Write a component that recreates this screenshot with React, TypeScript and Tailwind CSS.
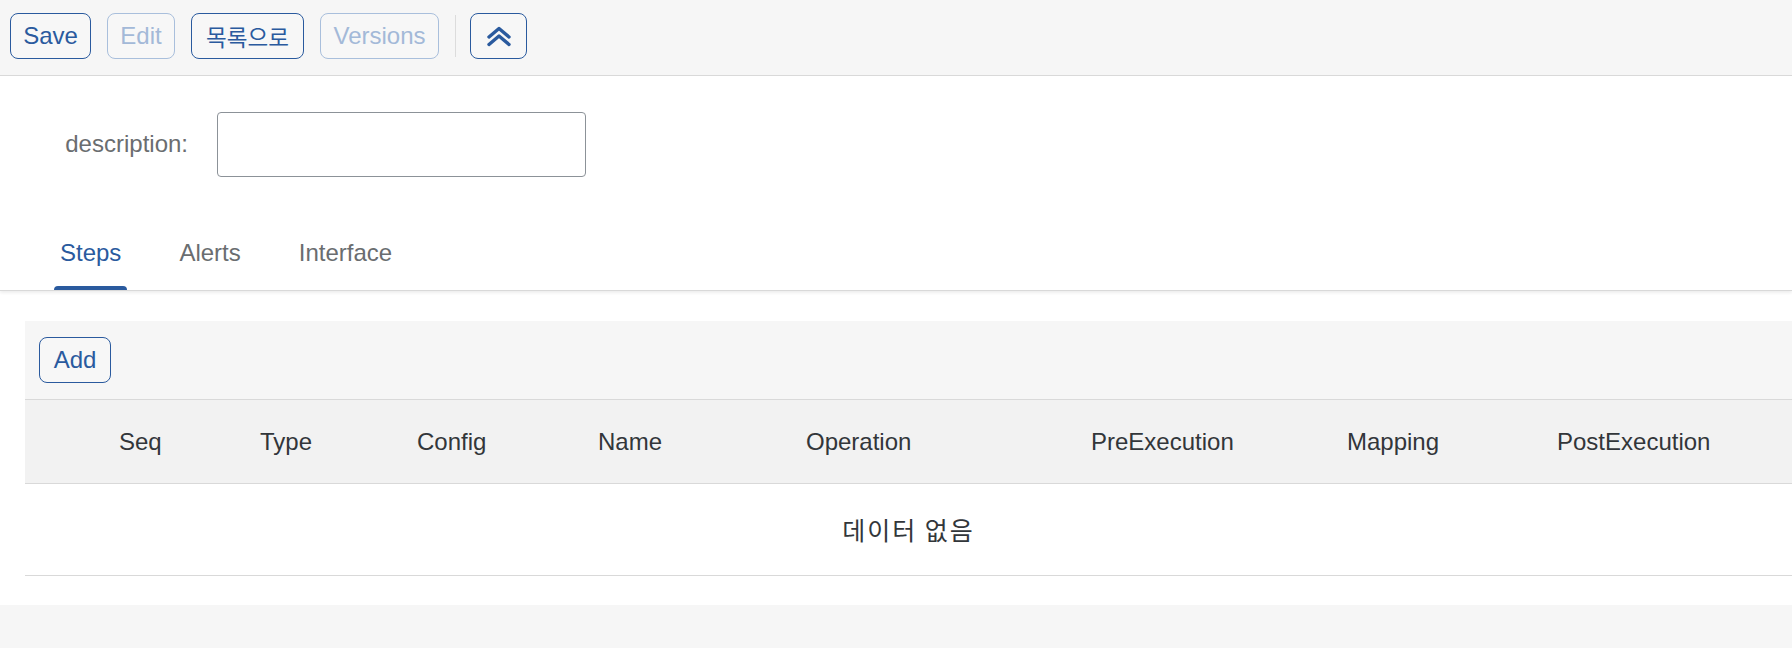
import React from "react";

const font = "font-['Liberation_Sans','Noto_Sans_CJK_KR',sans-serif]";

function Btn({ children, disabled, w }: { children: React.ReactNode; disabled?: boolean; w: string }) {
  return (
    <button
      className={
        "h-[46px] rounded-[8px] border flex items-center justify-center bg-[#f7f7f7] text-[24px] leading-none " +
        w +
        (disabled ? " border-[#a9bfdc] text-[#a3b9d8]" : " border-[#2a5a9e] text-[#2a5a9e]")
      }
    >
      {children}
    </button>
  );
}

const cols = ["", "Seq", "Type", "Config", "Name", "Operation", "PreExecution", "Mapping", "PostExecution"];

export default function App() {
  return (
    <div className={"w-full h-[648px] bg-[#f6f6f6] overflow-hidden " + font}>
      {/* top toolbar */}
      <div className="h-[76px] border-b border-[#d9d9d9] bg-[#f6f6f6] flex items-start pt-[13px] pl-[10px]">
        <div className="flex gap-[16px]">
          <Btn w="w-[81px]">Save</Btn>
          <Btn w="w-[68px]" disabled>
            Edit
          </Btn>
          <Btn w="w-[113px]">
            <span className="text-[22.5px] font-['Noto_Sans_CJK_KR',sans-serif]">목록으로</span>
          </Btn>
          <Btn w="w-[119px]" disabled>
            Versions
          </Btn>
        </div>
        <div className="ml-[16px] mt-[2px] w-px h-[42px] bg-[#dcdcdc]" />
        <div className="ml-[14px]">
          <Btn w="w-[57px]">
            <svg width="26" height="21" viewBox="0 0 26 21" fill="none" stroke="#2a5a9e" strokeWidth="3.4" strokeLinecap="round" strokeLinejoin="round">
              <path d="M3 11 L13 2.5 L23 11" />
              <path d="M3 18.5 L13 10 L23 18.5" />
            </svg>
          </Btn>
        </div>
      </div>

      {/* white content */}
      <div className="bg-white h-[529px]">
        {/* form */}
        <div className="pt-[36px] flex items-center">
          <div className="w-[188px] text-right text-[24px] text-[#6a6d70] leading-none pb-[2px]">description:</div>
          <div className="ml-[29px] w-[369px] h-[65px] border border-[#8c9298] rounded-[4px] bg-white" />
        </div>

        {/* tabs */}
        <div className="mt-[39px] h-[75px] flex pl-[54px] gap-[46px] border-b border-[#d9d9d9] shadow-[0_2px_3px_rgba(0,0,0,0.07)]">
          {["Steps", "Alerts", "Interface"].map((t, i) => (
            <div key={t} className="relative px-[6px] flex items-center">
              <span className={"text-[24px] leading-none " + (i === 0 ? "text-[#2a5a9e]" : "text-[#6a6d70]")}>{t}</span>
              {i === 0 && <div className="absolute left-0 right-0 bottom-0 h-[4px] rounded-t-[4px] bg-[#2a5a9e]" />}
            </div>
          ))}
        </div>

        {/* table */}
        <div className="mt-[30px] ml-[25px]">
          <div className="h-[79px] bg-[#f6f6f6] border-b border-[#d9d9d9] flex items-center pl-[14px]">
            <Btn w="w-[72px]">Add</Btn>
          </div>
          <div className="h-[84px] bg-[#f2f2f2] border-b border-[#d9d9d9] grid grid-cols-[78px_141px_157px_181px_208px_285px_256px_210px_1fr] items-center">
            {cols.map((c, i) => (
              <div key={i} className="pl-[16px] text-[24px] leading-none text-[#32363a] whitespace-nowrap">
                {c}
              </div>
            ))}
          </div>
          <div className="h-[92px] border-b border-[#d9d9d9] flex items-center justify-center">
            <span className="text-[25px] tracking-[2px] text-[#32363a] font-['Noto_Sans_CJK_KR',sans-serif] leading-none">데이터 없음</span>
          </div>
        </div>
      </div>
    </div>
  );
}
